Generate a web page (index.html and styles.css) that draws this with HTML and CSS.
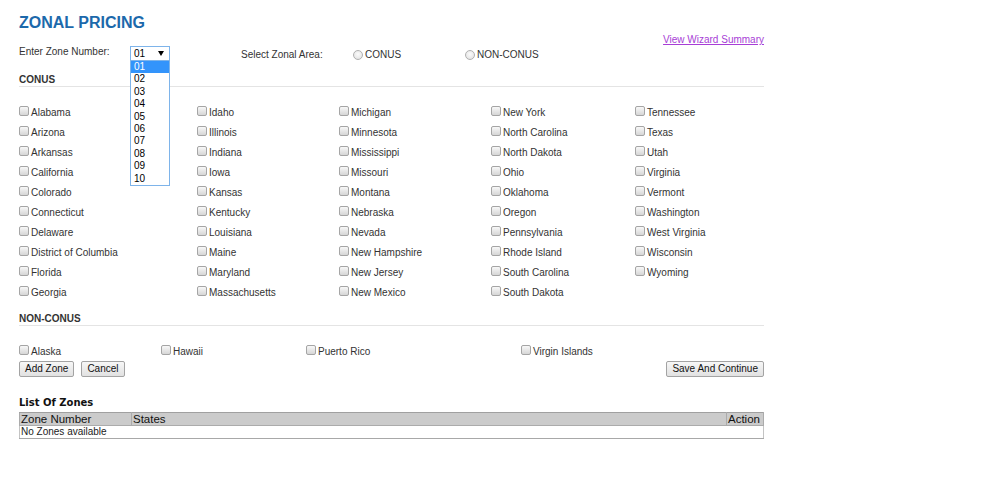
FILE: index.html
```html
<!DOCTYPE html>
<html lang="en">
<head>
<meta charset="utf-8">
<title>Zonal Pricing</title>
<link rel="stylesheet" href="styles.css">
</head>
<body>
<div class="page">
  <h1 class="title">ZONAL PRICING</h1>

  <div class="zone-row">
    <span class="field-label">Enter Zone Number:</span>
    <div class="select-wrap">
      <div class="select"><span>01</span><svg class="arrow" width="6" height="5" viewBox="0 0 6 5"><path d="M0 0H6L3 5Z" fill="#000"/></svg></div>
      <ul class="options">
        <li class="selected">01</li>
        <li>02</li>
        <li>03</li>
        <li>04</li>
        <li>05</li>
        <li>06</li>
        <li>07</li>
        <li>08</li>
        <li>09</li>
        <li>10</li>
      </ul>
    </div>
    <span class="area-label">Select Zonal Area:</span>
    <label class="radio-opt"><input type="radio" name="area" class="radio">CONUS</label>
    <label class="radio-opt"><input type="radio" name="area" class="radio">NON-CONUS</label>
    <a class="summary-link" href="#">View Wizard Summary</a>
  </div>

  <div class="section-title">CONUS</div>
  <div class="state-grid">
    <label class="opt"><input type="checkbox" class="cb">Alabama</label>
    <label class="opt"><input type="checkbox" class="cb">Arizona</label>
    <label class="opt"><input type="checkbox" class="cb">Arkansas</label>
    <label class="opt"><input type="checkbox" class="cb">California</label>
    <label class="opt"><input type="checkbox" class="cb">Colorado</label>
    <label class="opt"><input type="checkbox" class="cb">Connecticut</label>
    <label class="opt"><input type="checkbox" class="cb">Delaware</label>
    <label class="opt"><input type="checkbox" class="cb">District of Columbia</label>
    <label class="opt"><input type="checkbox" class="cb">Florida</label>
    <label class="opt"><input type="checkbox" class="cb">Georgia</label>

    <label class="opt"><input type="checkbox" class="cb">Idaho</label>
    <label class="opt"><input type="checkbox" class="cb">Illinois</label>
    <label class="opt"><input type="checkbox" class="cb">Indiana</label>
    <label class="opt"><input type="checkbox" class="cb">Iowa</label>
    <label class="opt"><input type="checkbox" class="cb">Kansas</label>
    <label class="opt"><input type="checkbox" class="cb">Kentucky</label>
    <label class="opt"><input type="checkbox" class="cb">Louisiana</label>
    <label class="opt"><input type="checkbox" class="cb">Maine</label>
    <label class="opt"><input type="checkbox" class="cb">Maryland</label>
    <label class="opt"><input type="checkbox" class="cb">Massachusetts</label>

    <label class="opt"><input type="checkbox" class="cb">Michigan</label>
    <label class="opt"><input type="checkbox" class="cb">Minnesota</label>
    <label class="opt"><input type="checkbox" class="cb">Mississippi</label>
    <label class="opt"><input type="checkbox" class="cb">Missouri</label>
    <label class="opt"><input type="checkbox" class="cb">Montana</label>
    <label class="opt"><input type="checkbox" class="cb">Nebraska</label>
    <label class="opt"><input type="checkbox" class="cb">Nevada</label>
    <label class="opt"><input type="checkbox" class="cb">New Hampshire</label>
    <label class="opt"><input type="checkbox" class="cb">New Jersey</label>
    <label class="opt"><input type="checkbox" class="cb">New Mexico</label>

    <label class="opt"><input type="checkbox" class="cb">New York</label>
    <label class="opt"><input type="checkbox" class="cb">North Carolina</label>
    <label class="opt"><input type="checkbox" class="cb">North Dakota</label>
    <label class="opt"><input type="checkbox" class="cb">Ohio</label>
    <label class="opt"><input type="checkbox" class="cb">Oklahoma</label>
    <label class="opt"><input type="checkbox" class="cb">Oregon</label>
    <label class="opt"><input type="checkbox" class="cb">Pennsylvania</label>
    <label class="opt"><input type="checkbox" class="cb">Rhode Island</label>
    <label class="opt"><input type="checkbox" class="cb">South Carolina</label>
    <label class="opt"><input type="checkbox" class="cb">South Dakota</label>

    <label class="opt"><input type="checkbox" class="cb">Tennessee</label>
    <label class="opt"><input type="checkbox" class="cb">Texas</label>
    <label class="opt"><input type="checkbox" class="cb">Utah</label>
    <label class="opt"><input type="checkbox" class="cb">Virginia</label>
    <label class="opt"><input type="checkbox" class="cb">Vermont</label>
    <label class="opt"><input type="checkbox" class="cb">Washington</label>
    <label class="opt"><input type="checkbox" class="cb">West Virginia</label>
    <label class="opt"><input type="checkbox" class="cb">Wisconsin</label>
    <label class="opt"><input type="checkbox" class="cb">Wyoming</label>
  </div>

  <div class="section-title section-title--non">NON-CONUS</div>
  <div class="non-grid">
    <label class="opt"><input type="checkbox" class="cb">Alaska</label>
    <label class="opt"><input type="checkbox" class="cb">Hawaii</label>
    <label class="opt"><input type="checkbox" class="cb">Puerto Rico</label>
    <label class="opt"><input type="checkbox" class="cb">Virgin Islands</label>
  </div>

  <div class="actions">
    <div class="actions-left">
      <button class="btn" type="button">Add Zone</button>
      <button class="btn" type="button">Cancel</button>
    </div>
    <button class="btn" type="button">Save And Continue</button>
  </div>

  <h2 class="list-title">List Of Zones</h2>
  <table class="zones">
    <colgroup>
      <col class="col-num">
      <col>
      <col class="col-action">
    </colgroup>
    <thead>
      <tr><th>Zone Number</th><th>States</th><th>Action</th></tr>
    </thead>
    <tbody>
      <tr><td colspan="3">No Zones available</td></tr>
    </tbody>
  </table>
</div>
</body>
</html>
```

FILE: styles.css
```css
html, body {
  margin: 0;
  padding: 0;
  background: #fff;
}

body {
  font-family: "Liberation Sans", Arial, sans-serif;
  font-size: 10px;
  color: #333;
}

.page {
  width: 745px;
  padding: 13px 0 0 19px;
}

.title {
  margin: 0 0 1px;
  font-size: 16px;
  line-height: 20px;
  font-weight: bold;
  color: #1c69ab;
}

/* zone number row */
.zone-row {
  display: flex;
  align-items: flex-start;
  height: 40px;
  line-height: 12px;
}

.field-label {
  width: 111px;
  margin-top: 12px;
}

.select-wrap {
  position: relative;
  width: 40px;
  margin-top: 12px;
}

.select {
  box-sizing: border-box;
  height: 15px;
  border: 1px solid #7eb4ea;
  display: flex;
  align-items: center;
  justify-content: space-between;
  padding: 0 5px 0 3px;
  line-height: 13px;
  color: #000;
  background: #fff;
}

.arrow {
  display: block;
}

.options {
  position: absolute;
  top: 14px;
  left: 0;
  z-index: 5;
  box-sizing: border-box;
  width: 40px;
  margin: 0;
  padding: 0;
  list-style: none;
  background: #fff;
  border: 1px solid #7eb4ea;
  color: #000;
}

.options li {
  line-height: 12.4px;
  padding-left: 3px;
}

.options li.selected {
  background: #3394fb;
  color: #fff;
}

.area-label {
  width: 112px;
  margin: 15px 0 0 71px;
}

.radio-opt {
  display: flex;
  align-items: flex-start;
  width: 112px;
  margin-top: 15px;
}

.radio {
  appearance: none;
  -webkit-appearance: none;
  box-sizing: border-box;
  width: 10px;
  height: 10px;
  margin: 1px 2px 0 0;
  border: 1px solid #b0b0b0;
  border-radius: 50%;
  background: radial-gradient(circle at 50% 40%, #fbfbfb 0%, #dedede 100%);
  flex: none;
}

.summary-link {
  margin-left: auto;
  color: #a73ed6;
  text-decoration: underline;
}

/* sections */
.section-title {
  font-weight: bold;
  line-height: 12px;
  color: #333;
  border-bottom: 1px solid #e4e4e4;
  margin-bottom: 16px;
}

.section-title--non {
  margin-top: 10px;
  margin-bottom: 16px;
}

.state-grid {
  display: grid;
  grid-template-columns: 178px 142px 152px 144px 1fr;
  grid-template-rows: repeat(10, 20px);
  grid-auto-flow: column;
}

.non-grid {
  display: grid;
  grid-template-columns: 142px 145px 215px 1fr;
  grid-template-rows: 19px;
}

.opt {
  display: flex;
  align-items: flex-start;
  line-height: 20px;
  white-space: nowrap;
}

.cb {
  appearance: none;
  -webkit-appearance: none;
  box-sizing: border-box;
  width: 10px;
  height: 10px;
  margin: 3px 2px 0 0;
  border: 1px solid #a5a5a5;
  border-radius: 2px;
  background: linear-gradient(#f8f8f8, #d6d6d6);
  flex: none;
}

/* buttons */
.actions {
  display: flex;
  justify-content: space-between;
  align-items: flex-start;
}

.actions-left {
  display: flex;
  gap: 7px;
}

.btn {
  box-sizing: border-box;
  height: 16px;
  margin: 0;
  padding: 0 5px;
  font-family: "Liberation Sans", Arial, sans-serif;
  font-size: 10px;
  line-height: 14px;
  color: #111;
  background: linear-gradient(#f7f7f7, #e1e1e1);
  border: 1px solid #a3a3a3;
  border-radius: 2px;
}

/* list */
.list-title {
  margin: 20px 0 3px;
  font-family: "DejaVu Sans", Verdana, sans-serif;
  font-size: 10px;
  line-height: 12px;
  font-weight: bold;
  color: #111;
}

.zones {
  width: 745px;
  border-collapse: collapse;
  table-layout: fixed;
  border: 1px solid #a8a8a8;
}

.col-num {
  width: 112px;
}

.col-action {
  width: 37px;
}

.zones th {
  background: #cbcbcb;
  border: 1px solid #ababab;
  border-top-color: #a0a0a0;
  font-size: 11.5px;
  line-height: 12px;
  font-weight: normal;
  text-align: left;
  padding: 0 0 0 1px;
  color: #111;
}

.zones td {
  border: 1px solid #c4c4c4;
  border-bottom-color: #a8a8a8;
  font-size: 10px;
  line-height: 12px;
  padding: 0 1px;
  color: #222;
}
```
